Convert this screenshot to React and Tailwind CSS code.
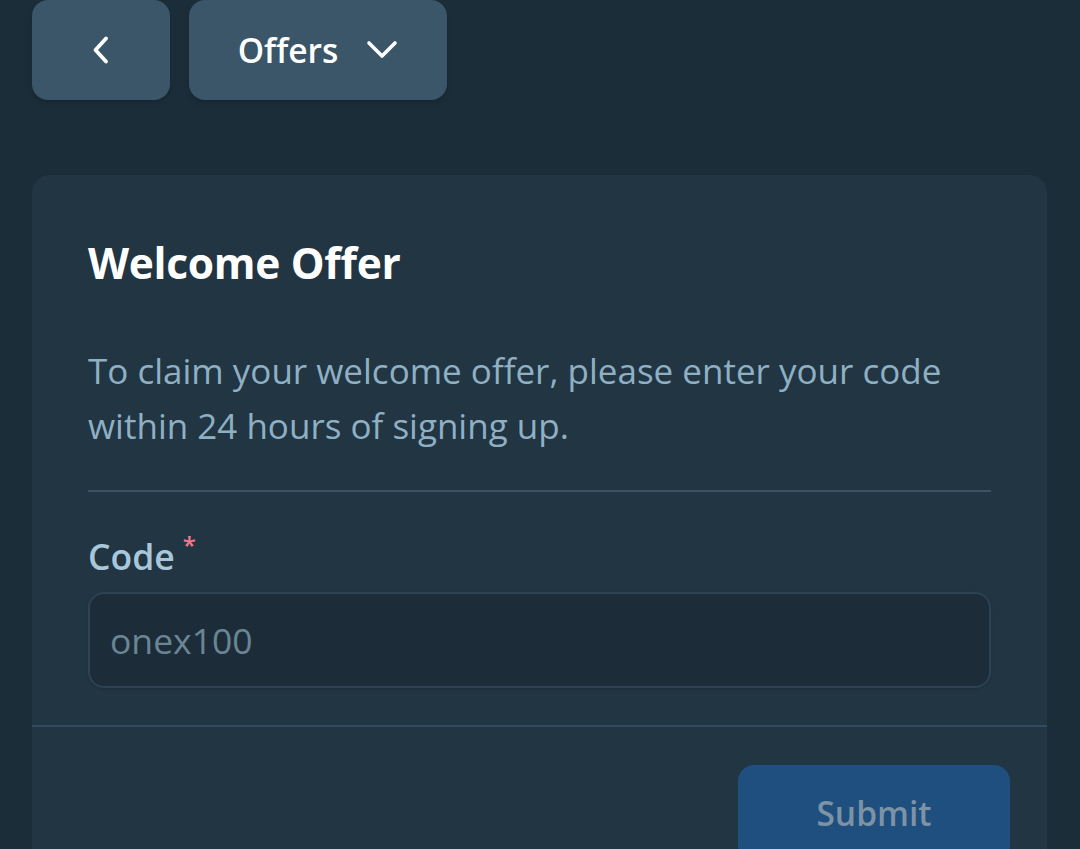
import React, { useState } from "react";

// Chevron icons drawn inline
function ChevronLeft() {
  return (
    <svg width="22" height="30" viewBox="0 0 22 30" fill="none">
      <path d="M16 3.5 L5.5 15 L16 26.5" stroke="white" strokeWidth="3.8" strokeLinecap="round" strokeLinejoin="round" />
    </svg>
  );
}

function ChevronDown() {
  return (
    <svg width="32" height="20" viewBox="0 0 32 20" fill="none">
      <path d="M3 3 L16 16 L29 3" stroke="white" strokeWidth="3.6" strokeLinecap="round" strokeLinejoin="round" />
    </svg>
  );
}

export default function App() {
  const [code, setCode] = useState("");

  return (
    <div
      className="min-h-[849px] w-full bg-[#1b2d39] overflow-hidden"
      style={{ fontFamily: "'Open Sans', Lato, sans-serif" }}
    >
      {/* TOP BAR */}
      <div className="flex gap-[19px] pl-[32px] h-[100px]">
        <button className="w-[138px] h-[100px] rounded-[16px] bg-[#3a5668] flex items-center justify-center shadow-md">
          <ChevronLeft />
        </button>
        <button className="w-[258px] h-[100px] rounded-[16px] bg-[#3a5668] flex items-center justify-center gap-[28px] text-white text-[33.5px] font-semibold shadow-md">
          Offers
          <ChevronDown />
        </button>
      </div>

      {/* CARD */}
      <div className="ml-[32px] mt-[75px] w-[1015px] rounded-t-[18px] bg-[#213543] h-[700px]">
        <div className="px-[56px] pt-[58px]">
          <h2 className="text-white text-[42.5px] font-bold leading-[60px] tracking-[-0.3px]">Welcome Offer</h2>
          <p className="mt-[50px] text-[#8fb0c3] text-[35px] leading-[55px]">
            To claim your welcome offer, please enter your code within 24 hours of signing up.
          </p>
          <div className="mt-[37px] h-[2px] bg-[#3a5262]" />

          <label className="mt-[39px] flex items-start text-[#a9c7d9] text-[35.5px] font-semibold leading-[50px]">
            Code
            <span className="text-[#f07a8c] text-[24px] leading-[28px] ml-[8px]">*</span>
          </label>
          <input
            value={code}
            onChange={(e) => setCode(e.target.value)}
            placeholder="onex100"
            className="mt-[11px] w-full h-[96px] rounded-[16px] bg-[#1c2d39] border-2 border-[#2d4352] px-[20px] text-[35.5px] text-white placeholder-[#6b8594] outline-none shadow-sm"
          />
        </div>

        <div className="mt-[37px] h-[2px] bg-[#2f4d60]" />

        <div className="flex justify-end pr-[37px] pt-[38px]">
          <button className="w-[272px] h-[96px] rounded-[16px] bg-[#1e4f7f] text-[#7d93a5] text-[33.5px] font-semibold">
            Submit
          </button>
        </div>
      </div>
    </div>
  );
}
